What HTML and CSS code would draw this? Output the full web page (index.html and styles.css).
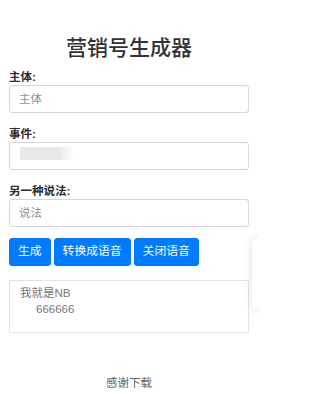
FILE: index.html
```html
<!DOCTYPE html>
<html lang="zh">
<head>
<meta charset="utf-8">
<title>营销号生成器</title>
<link rel="stylesheet" href="styles.css">
</head>
<body>
<div class="page">
  <h1 class="title">营销号生成器</h1>
  <div class="group">
    <label class="label">主体:</label>
    <input class="field" type="text" placeholder="主体">
  </div>
  <div class="group">
    <label class="label">事件:</label>
    <div class="field-wrap">
      <input class="field" type="text">
      <span class="redact"></span>
    </div>
  </div>
  <div class="group">
    <label class="label">另一种说法:</label>
    <input class="field" type="text" placeholder="说法">
  </div>
  <div class="actions">
    <button class="btn">生成</button>
    <button class="btn">转换成语音</button>
    <button class="btn">关闭语音</button>
  </div>
  <textarea class="output">我就是NB
     666666</textarea>
  <p class="footer">感谢下载</p>
</div>
<div class="side-card"></div>
</body>
</html>
```
FILE: styles.css
```css
html, body {
  margin: 0;
  padding: 0;
  background: #fff;
  overflow: hidden;
}
body {
  font-family: "Liberation Sans", "Noto Sans CJK SC", sans-serif;
  color: #212529;
  position: relative;
  width: 258px;
  height: 394px;
}
.page {
  padding: 35px 9px 0;
  display: flex;
  flex-direction: column;
}
.title {
  margin: 0 0 9px;
  font-size: 21px;
  line-height: 25px;
  font-weight: 500;
  text-align: center;
  color: #333;
}
.group {
  display: flex;
  flex-direction: column;
  margin-bottom: 13px;
}
.group:nth-of-type(3) {
  margin-bottom: 11px;
}
.label {
  font-size: 11.5px;
  line-height: 16px;
  font-weight: bold;
  color: #2b2b2b;
}
.field-wrap {
  position: relative;
}
.field {
  box-sizing: border-box;
  width: 240px;
  height: 28px;
  margin: 0;
  padding: 0 9px;
  border: 1px solid #d3d8dc;
  border-radius: 3px;
  font-family: inherit;
  font-size: 11.5px;
  color: #495057;
  background: #fff;
  outline: none;
}
.field::placeholder {
  color: #8d9296;
}
.redact {
  position: absolute;
  left: 11px;
  top: 5px;
  width: 54px;
  height: 13px;
  background: linear-gradient(to right, #e8e8e8 0, #e8e8e8 72%, rgba(232,232,232,0) 100%);
  filter: blur(0.6px);
}
.actions {
  display: flex;
  gap: 3px;
  margin-bottom: 14px;
}
.btn {
  height: 28px;
  padding: 0 8px;
  border: 1px solid #007bff;
  border-radius: 3px;
  background: #007bff;
  color: #fff;
  font-family: inherit;
  font-size: 11.8px;
  line-height: 1;
}
.output {
  box-sizing: border-box;
  width: 240px;
  height: 53px;
  margin: 0;
  padding: 4px 10px;
  border: 1px solid #e3e3e3;
  border-radius: 1px;
  font-family: inherit;
  font-size: 11.5px;
  line-height: 16px;
  color: #777;
  resize: none;
  outline: none;
}
.footer {
  margin: 42px 0 0;
  font-size: 11.5px;
  line-height: 16px;
  text-align: center;
  color: #666;
}
.side-card {
  position: absolute;
  left: 252px;
  top: 238px;
  width: 40px;
  height: 72px;
  background: #fff;
  border-radius: 6px;
  box-shadow: 0 0 10px rgba(0, 0, 0, 0.13);
}
```
